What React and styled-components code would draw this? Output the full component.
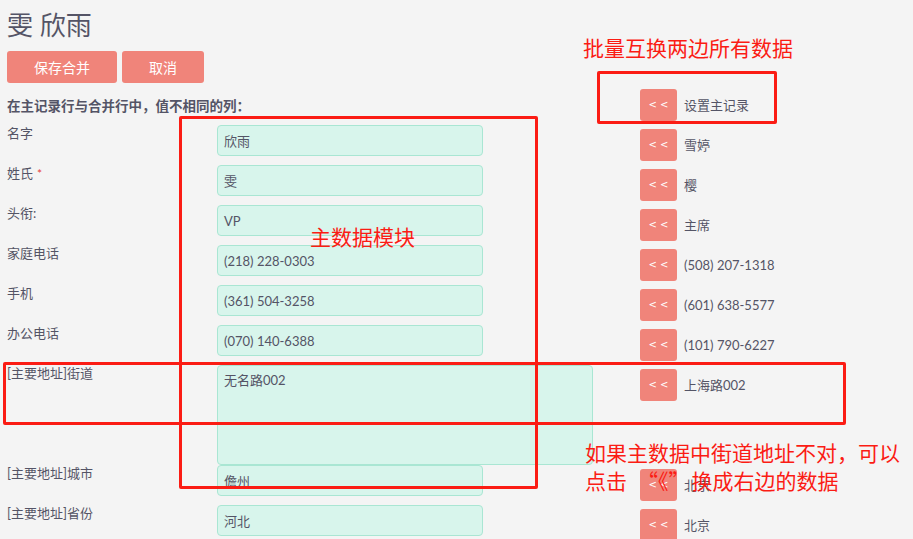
import React from "react";
import styled, { createGlobalStyle } from "styled-components";

const Global = createGlobalStyle`
  html, body { margin: 0; padding: 0; background: #f4f4f4; }
  body {
    font-family: Lato, "Noto Sans CJK SC", sans-serif;
    color: #545466;
    overflow: hidden;
  }
  * { box-sizing: border-box; }
`;

const Page = styled.div`
  position: relative;
  width: 913px;
  height: 539px;
  padding: 7px 7px 0;
  overflow: hidden;
`;

const Title = styled.h1`
  margin: 0;
  font-size: 26px;
  line-height: 36px;
  font-weight: 400;
  color: #545466;
`;

const Actions = styled.div`
  display: flex;
  gap: 5px;
  margin-top: 8px;
`;

const Button = styled.button`
  height: 32px;
  padding: 0 27px;
  border: none;
  border-radius: 3px;
  background: #f0847a;
  color: #fff;
  font-family: Lato, "Noto Sans CJK SC", sans-serif;
  font-size: 14px;
  cursor: pointer;
`;

const Table = styled.div`
  margin-top: 2px;
`;

const Row = styled.div`
  display: grid;
  grid-template-columns: 210px 423px 1fr;
  height: ${(p) => (p.$tall ? 100 : 40)}px;
`;

const HeaderText = styled.div`
  grid-column: 1 / span 2;
  align-self: center;
  font-size: 13.5px;
  font-weight: 700;
  color: #545466;
`;

const Label = styled.div`
  font-size: 13px;
  line-height: 16px;
  padding-top: 0;
`;

const Required = styled.span`
  color: #e8403a;
  margin-left: 4px;
  font-size: 12px;
`;

const Field = styled.div`
  width: ${(p) => (p.$wide ? 376 : 266)}px;
  height: ${(p) => (p.$wide ? 100 : 31)}px;
  background: #d8f5ec;
  border: 1px solid #a9e6d3;
  border-radius: 4px;
  padding: ${(p) => (p.$wide ? "4px 6px" : "0 6px")};
  display: flex;
  align-items: ${(p) => (p.$wide ? "flex-start" : "center")};
  font-size: 13px;
  color: #545466;
  overflow: hidden;
`;

const RightCell = styled.div`
  display: flex;
  align-items: center;
  gap: 7px;
  padding-top: 4px;
  height: 35px;
  font-size: 13px;
`;

const Swap = styled.button`
  width: 37px;
  height: 32px;
  border: none;
  border-radius: 3px;
  background: #f0847a;
  color: #fff;
  font-family: "DejaVu Sans", sans-serif;
  font-size: 10px;
  letter-spacing: 3px;
  padding: 0 0 0 3px;
  cursor: pointer;
`;

const Value = styled.span`
  color: #545466;
`;

const Box = styled.div`
  position: absolute;
  border: 3px solid #fb1c14;
  border-radius: 2px;
  pointer-events: none;
`;

const Note = styled.div`
  position: absolute;
  color: #fb1c14;
  font-family: "Noto Sans CJK SC", sans-serif;
  font-size: 21px;
  line-height: ${(p) => p.$lh || 24}px;
  white-space: nowrap;
  pointer-events: none;
`;

const Quote = styled.span`
  margin: 0 2px 0 10px;
`;

const rows = [
  { label: "名字", value: "欣雨", right: "雪婷" },
  { label: "姓氏", required: true, value: "雯", right: "樱" },
  { label: "头衔:", value: "VP", right: "主席" },
  { label: "家庭电话", value: "(218) 228-0303", right: "(508) 207-1318" },
  { label: "手机", value: "(361) 504-3258", right: "(601) 638-5577" },
  { label: "办公电话", value: "(070) 140-6388", right: "(101) 790-6227" },
  { label: "[主要地址]街道", value: "无名路002", right: "上海路002", wide: true },
  { label: "[主要地址]城市", value: "儋州", right: "北京" },
  { label: "[主要地址]省份", value: "河北", right: "北京" },
];

export default function App() {
  return (
    <>
      <Global />
      <Page>
        <Title>雯 欣雨</Title>
        <Actions>
          <Button>保存合并</Button>
          <Button>取消</Button>
        </Actions>
        <Table>
          <Row>
            <HeaderText>在主记录行与合并行中，值不相同的列：</HeaderText>
            <RightCell>
              <Swap>&lt;&lt;</Swap>
              <Value>设置主记录</Value>
            </RightCell>
          </Row>
          {rows.map((r) => (
            <Row key={r.label} $tall={r.wide}>
              <Label>
                {r.label}
                {r.required && <Required>*</Required>}
              </Label>
              <div>
                <Field $wide={r.wide}>{r.value}</Field>
              </div>
              <RightCell>
                <Swap>&lt;&lt;</Swap>
                <Value>{r.right}</Value>
              </RightCell>
            </Row>
          ))}
        </Table>

        <Box style={{ left: 179, top: 116, width: 359, height: 373 }} />
        <Box style={{ left: 3, top: 362, width: 843, height: 63 }} />
        <Box style={{ left: 597, top: 71, width: 180, height: 53 }} />
        <Note style={{ left: 583, top: 35 }}>批量互换两边所有数据</Note>
        <Note style={{ left: 310, top: 224 }}>主数据模块</Note>
        <Note $lh={28} style={{ left: 585, top: 438 }}>
          如果主数据中街道地址不对，可以
          <br />
          点击<Quote>“《”</Quote>换成右边的数据
        </Note>
      </Page>
    </>
  );
}
